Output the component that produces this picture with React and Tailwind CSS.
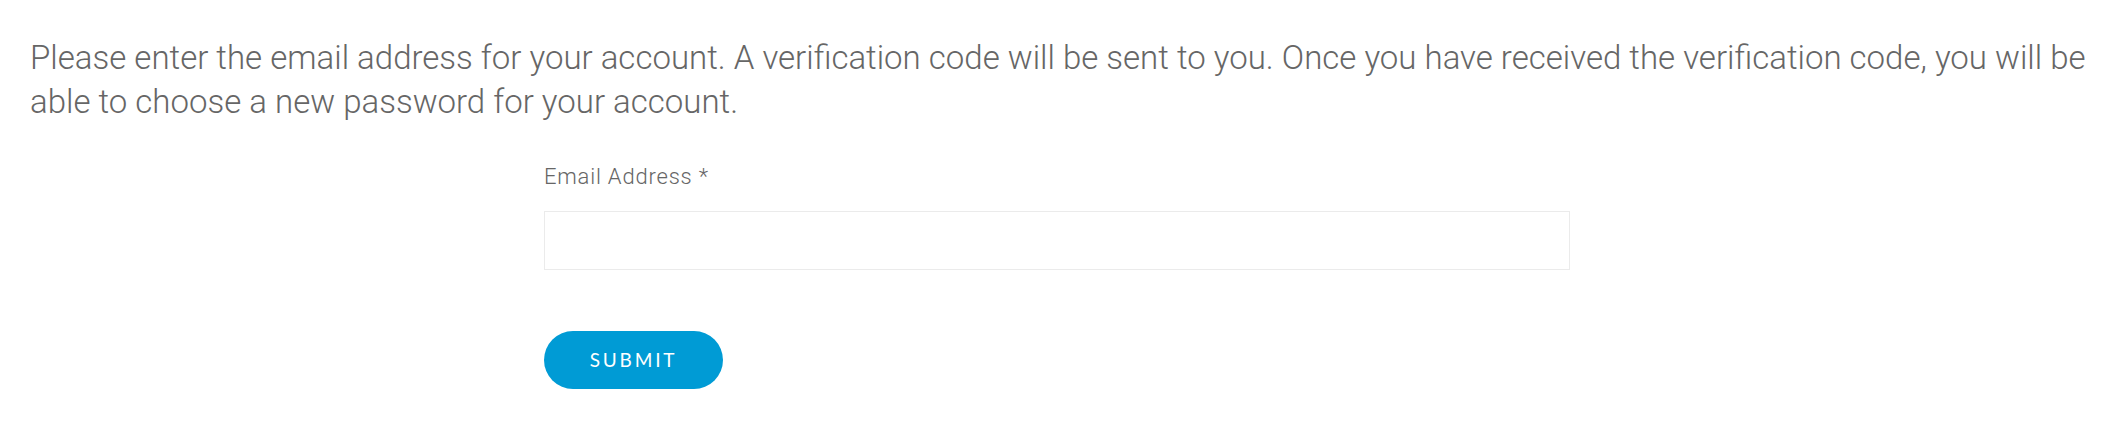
export default function App() {
  return (
    <div className="min-h-[441px] bg-white pl-[30px] pr-[12px] pt-[36px] font-['Roboto',sans-serif]">
      <p className="text-[33px] font-light leading-[44px] text-[#666666]">
        Please enter the email address for your account. A verification code will be sent to you. Once you have received
        the verification code, you will be able to choose a new password for your account.
      </p>

      <form className="ml-[514px] mt-[36px] w-[1026px]" onSubmit={(e) => e.preventDefault()}>
        <label htmlFor="email" className="block text-[22px] font-light leading-[33px] tracking-[0.8px] text-[#666666]">
          Email Address *
        </label>
        <input
          id="email"
          type="email"
          className="mt-[18px] block h-[59px] w-full border border-[#ebebeb] bg-white px-4 text-[20px] outline-none"
        />
        <button
          type="submit"
          className="mt-[61px] h-[58px] w-[179px] rounded-full bg-[#009bd5] font-['Lato',sans-serif] text-[19px] tracking-[2.8px] text-white"
        >
          SUBMIT
        </button>
      </form>
    </div>
  );
}
